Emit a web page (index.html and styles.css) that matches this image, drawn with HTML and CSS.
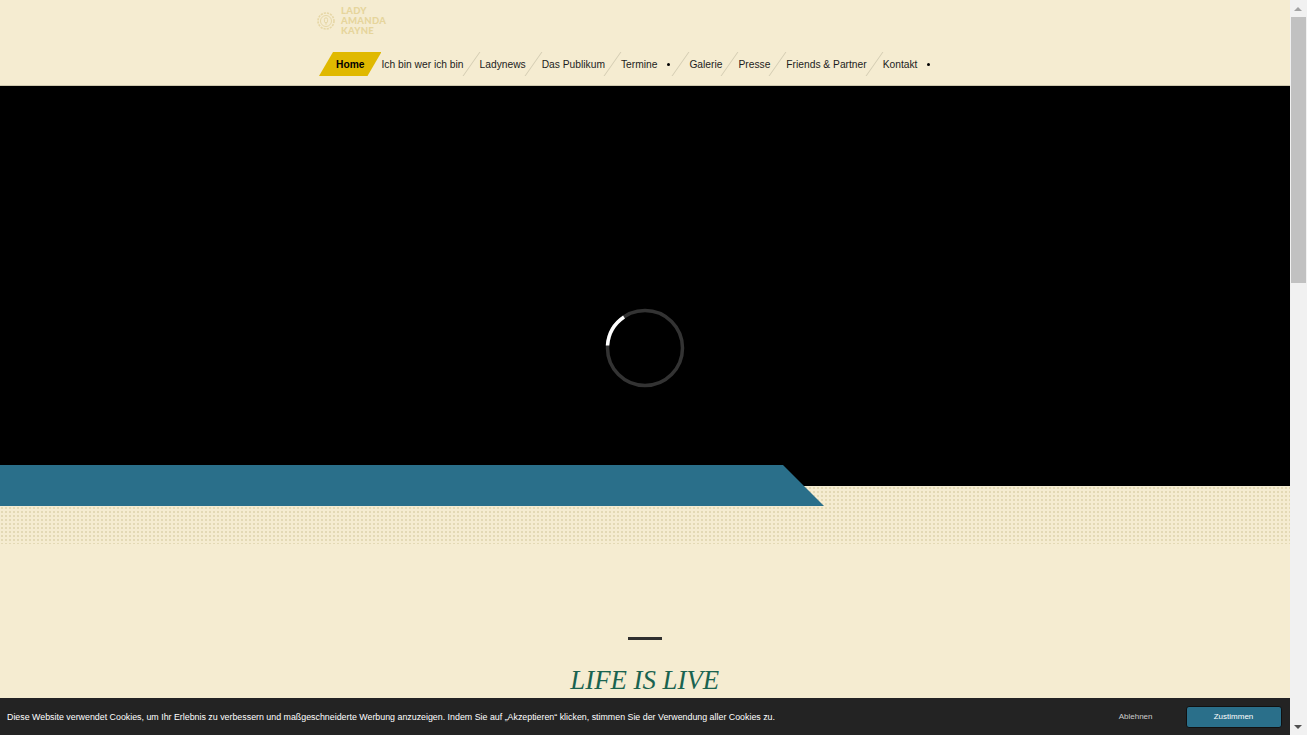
FILE: index.html
```html
<!DOCTYPE html>
<html lang="de">
<head>
    <meta charset="UTF-8">
    <meta name="viewport" content="width=device-width, initial-scale=1.0">
    <title>Lady Amanda Kayne</title>
    <link rel="stylesheet" href="styles.css">
</head>
<body>
    <div class="window">
        <div class="page">
            <header class="site-header">
                <a class="logo" href="#">
                    <svg class="logo-mark" width="18" height="20" viewBox="0 0 18 20" fill="none" stroke="#e6d7a6" stroke-width="1">
                        <circle cx="9" cy="10" r="5.5"/>
                        <circle cx="9" cy="10" r="8" stroke-width="1.6" stroke-dasharray="2.2 1"/>
                        <rect x="7.4" y="6.8" width="3.2" height="5" rx="1.6"/>
                        <path d="M9 11.8v2"/>
                    </svg>
                    <span class="logo-text">LADY<br>AMANDA<br>KAYNE</span>
                </a>
                <nav class="main-nav">
                    <a class="nav-item active" href="#"><span>Home</span></a>
                    <a class="nav-item" href="#">Ich bin wer ich bin</a>
                    <a class="nav-item sep" href="#">Ladynews</a>
                    <a class="nav-item sep" href="#">Das Publikum</a>
                    <a class="nav-item sep has-sub" href="#">Termine</a>
                    <a class="nav-item sep" href="#">Galerie</a>
                    <a class="nav-item sep" href="#">Presse</a>
                    <a class="nav-item sep" href="#">Friends &amp; Partner</a>
                    <a class="nav-item sep has-sub" href="#">Kontakt</a>
                </nav>
            </header>

            <section class="hero">
                <svg class="spinner" width="80" height="80" viewBox="0 0 80 80" fill="none" stroke-width="3.5">
                    <circle cx="40" cy="40" r="37.5" stroke="#333"/>
                    <path d="M2.5 37.5A37.5 37.5 0 0 1 19 9" stroke="#fff"/>
                </svg>
            </section>
            <div class="dots"></div>
            <div class="blue-band"></div>

            <section class="intro">
                <div class="intro-line"></div>
                <h1>LIFE IS LIVE</h1>
            </section>

            <div class="cookie-bar">
                <p>Diese Website verwendet Cookies, um Ihr Erlebnis zu verbessern und maßgeschneiderte Werbung anzuzeigen. Indem Sie auf „Akzeptieren“ klicken, stimmen Sie der Verwendung aller Cookies zu.</p>
                <button class="btn-decline">Ablehnen</button>
                <button class="btn-accept">Zustimmen</button>
            </div>
        </div>

        <div class="scrollbar">
            <div class="arrow-up"></div>
            <div class="thumb"></div>
            <div class="track"></div>
            <div class="arrow-down"></div>
        </div>
    </div>
</body>
</html>
```

FILE: styles.css
```css
html, body {
    margin: 0;
    height: 100%;
    overflow: hidden;
}

body {
    font-family: "Liberation Sans", Arial, sans-serif;
    background-color: #f5ecd1;
}

.window {
    display: flex;
    height: 735px;
}

.page {
    position: relative;
    flex: 1;
    overflow: hidden;
}

/* header */
.site-header {
    height: 86px;
    padding-left: 317px;
    box-sizing: border-box;
    border-bottom: 1px solid #cfc8ae;
}

.logo {
    display: flex;
    align-items: center;
    gap: 6px;
    height: 42px;
    text-decoration: none;
}

.logo-text {
    font-family: Lato, sans-serif;
    font-weight: 900;
    font-size: 9.5px;
    line-height: 10px;
    letter-spacing: 0.3px;
    color: #e6d59c;
}

.main-nav {
    display: flex;
    gap: 16px;
    height: 24px;
    margin-top: 10px;
    padding-left: 19px;
}

.nav-item {
    position: relative;
    font-size: 10.25px;
    line-height: 25px;
    color: #1c1c1c;
    text-decoration: none;
    white-space: nowrap;
}

.nav-item.sep::before {
    content: "";
    position: absolute;
    left: -9px;
    top: 0;
    width: 1px;
    height: 24px;
    background-color: #d3ccb2;
    transform: skewX(-35deg);
}

.has-sub {
    padding-right: 16px;
}

.has-sub::after {
    content: "";
    position: absolute;
    right: 3px;
    top: 11px;
    width: 3px;
    height: 3px;
    border-radius: 50%;
    background-color: #000;
}

.active {
    margin-right: 1px;
    font-weight: 700;
    color: #000;
}

.active span {
    position: relative;
}

.active::before {
    content: "";
    position: absolute;
    left: -17px;
    right: -17px;
    top: 0;
    height: 24px;
    background-color: #e0b900;
    clip-path: polygon(14px 0, 100% 0, calc(100% - 14px) 100%, 0 100%);
}

/* hero */
.hero {
    display: flex;
    align-items: center;
    justify-content: center;
    height: 400px;
    padding-top: 124px;
    background-color: #000;
    box-sizing: border-box;
}

.dots {
    height: 58px;
    background-image: radial-gradient(circle, #e3d9b5 1.1px, transparent 1.4px);
    background-size: 4px 4px;
}

.blue-band {
    position: absolute;
    left: 0;
    top: 465px;
    width: 824px;
    height: 41px;
    background-color: #2a6f8a;
    clip-path: polygon(0 0, 783px 0, 100% 100%, 0 100%);
}

/* intro */
.intro {
    padding-top: 93px;
    text-align: center;
}

.intro-line {
    width: 34px;
    height: 3px;
    margin: 0 auto;
    background-color: #2f2f2f;
}

.intro h1 {
    margin: 23px 0 0;
    font-family: "Liberation Serif", "Times New Roman", serif;
    font-size: 26.8px;
    line-height: 34px;
    font-style: italic;
    font-weight: 400;
    color: #1a6350;
}

/* cookie notice */
.cookie-bar {
    position: absolute;
    left: 0;
    right: 0;
    bottom: 0;
    display: flex;
    align-items: center;
    height: 37px;
    padding: 0 8px 0 7px;
    box-sizing: border-box;
    background-color: #232323;
    color: #fff;
}

.cookie-bar p {
    flex: 1;
    margin: 1px 0 0;
    font-size: 8.85px;
}

.btn-decline {
    margin-right: 33px;
    padding: 0;
    border: none;
    background: none;
    font-family: inherit;
    font-size: 8px;
    color: #ccc;
}

.btn-accept {
    width: 96px;
    height: 22px;
    padding: 0;
    border: 1px solid #111;
    border-radius: 3px;
    background-color: #2a6f8a;
    font-family: inherit;
    font-size: 8px;
    color: #fff;
}

/* scrollbar */
.scrollbar {
    display: flex;
    flex-direction: column;
    width: 17.5px;
    background-color: #f1f1f1;
}

.arrow-up,
.arrow-down {
    display: flex;
    align-items: center;
    justify-content: center;
    height: 17px;
}

.arrow-up::before {
    content: "";
    border-left: 4px solid transparent;
    border-right: 4px solid transparent;
    border-bottom: 4px solid #a3a3a3;
}

.arrow-down::before {
    content: "";
    border-left: 4px solid transparent;
    border-right: 4px solid transparent;
    border-top: 4px solid #505050;
}

.thumb {
    height: 266px;
    margin: 0 1px;
    background-color: #c1c1c1;
}

.track {
    flex: 1;
}
```
